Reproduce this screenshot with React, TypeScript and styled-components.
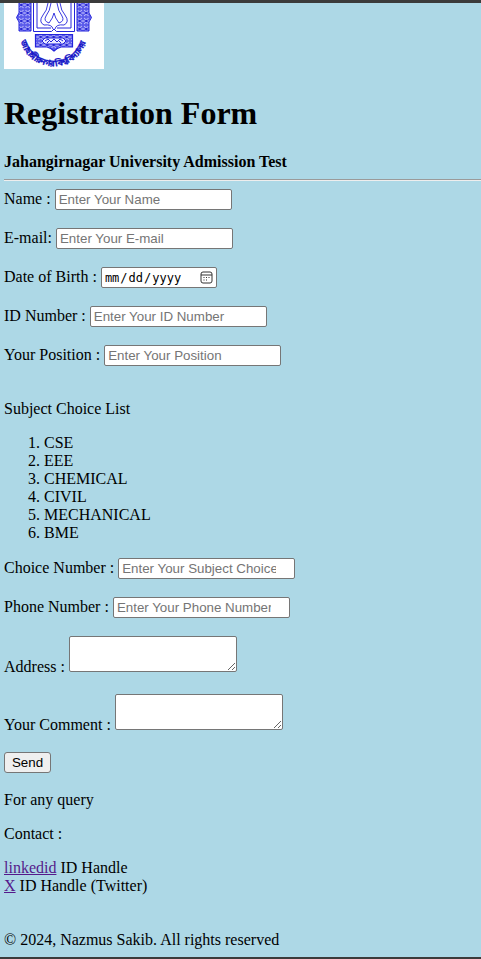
import React from "react";
import styled, { createGlobalStyle } from "styled-components";

const GlobalStyle = createGlobalStyle`
  * { box-sizing: border-box; }
  html, body { margin: 0; background: #3b3b3b; }
  body { font: 16px/18px "Liberation Serif", "Times New Roman", serif; color: #000; }
`;

const Page = styled.main`
  height: 959px;
  overflow: hidden;
  border-top: 3px solid #3b3b3b;
  border-bottom: 2px solid #3b3b3b;
  background: lightblue;
  padding-left: 4px;
`;

const Logo = styled.svg`
  display: block;
  width: 100px;
  height: 66px;
  background: #fff;
`;

const Title = styled.h1`
  margin: 26px 0 0;
  font-size: 32px;
  line-height: 37px;
`;

const Subtitle = styled.h4`
  margin: 21px 0 0;
  font-size: 16px;
  line-height: 18px;
`;

const Rule = styled.hr`
  margin: 8px 0;
  border: 0;
  border-top: 1px solid #9a9a9a;
  border-bottom: 1px solid #eeeeee;
  height: 2px;
`;

const Row = styled.label<{ $gap?: number }>`
  display: flex;
  align-items: baseline;
  gap: 4px;
  height: 21px;
  margin-bottom: ${(p) => p.$gap ?? 18}px;
  white-space: nowrap;
`;

const AreaRow = styled.label`
  display: flex;
  align-items: flex-end;
  gap: 4px;
  height: 40px;
  margin-bottom: 18px;
`;

const Field = styled.input`
  width: 177px;
  height: 21px;
  padding: 1px 18px 1px 3px;
  border: 1px solid #767676;
  border-radius: 2px;
  background: #fff;
  font: 13.333px "Liberation Sans", Arial, sans-serif;
  outline: none;
  &::placeholder { color: #757575; opacity: 1; }
`;

const DateBox = styled.span`
  display: inline-grid;
  grid-template-columns: 116px;
  align-items: center;
`;

const DateField = styled.input`
  grid-area: 1 / 1;
  width: 116px;
  height: 21px;
  padding: 1px 2px;
  border: 1px solid #767676;
  border-radius: 2px;
  background: #fff;
  color: #000;
  font: 12px "DejaVu Sans Mono", monospace;
  &::-webkit-calendar-picker-indicator { opacity: 0; }
`;

const CalendarIcon = styled.svg`
  grid-area: 1 / 1;
  justify-self: end;
  width: 13px;
  height: 13px;
  margin-right: 4px;
  pointer-events: none;
`;

const Area = styled.textarea`
  width: 168px;
  height: 36px;
  margin-bottom: 4px;
  border: 1px solid #767676;
  border-radius: 2px;
  background: #fff;
  resize: both;
`;

const Text = styled.p<{ $top?: number }>`
  margin: ${(p) => p.$top ?? 16}px 0 0;
`;

const Subjects = styled.ol`
  margin: 16px 0;
  padding-left: 40px;
`;

const Send = styled.button`
  display: block;
  width: 47px;
  height: 21px;
  padding: 0;
  border: 1px solid #767676;
  border-radius: 3px;
  background: #efefef;
  color: #000;
  font: 13.333px "Liberation Sans", Arial, sans-serif;
`;

const Link = styled.a`
  color: #551a8b;
  text-decoration: underline;
`;

const subjects = ["CSE", "EEE", "CHEMICAL", "CIVIL", "MECHANICAL", "BME"];

function Crest() {
  return (
    <Logo viewBox="4 3 100 66" role="img" aria-label="Jahangirnagar University">
      <defs>
        <pattern id="lace" x="18" y="1" width="6.5" height="8" patternUnits="userSpaceOnUse">
          <rect width="6.5" height="8" fill="#5a5aea" />
          <path d="M1 1L3.2 3 5.5 1M1 7L3.2 5 5.5 7M0 4H1.6M5 4H6.5" stroke="#dcdcff" strokeWidth=".9" fill="none" />
          <circle cx="3.2" cy="4" r="1" fill="#1414c8" />
        </pattern>
        <path id="motto" d="M20.5 41A34 34 0 0 0 86.5 40" />
      </defs>
      <g stroke="#2424db" strokeWidth="1">
        <path d="M19 2H31V31H19V22L16.5 17.500L19 13Z M77 2H89V13L91.500 17.500L89 22V31H77Z" fill="url(#lace)" />
        <path d="M33.500 3V31.500H51.500L54 29L56.500 31.500H74.500V3M37 3V28H51M71 3V28H57" fill="none" />
        <path d="M48 3Q47 11 43 15Q38 22 44 25Q52 24 53 29M60 3Q61 11 65 15Q70 22 64 25Q56 24 55 29M51 3Q50 11 46 16Q43 21 49 23Q53 18 54 13Q55 18 59 23Q65 21 62 16Q58 11 57 3" fill="none" strokeWidth=".9" />
      </g>
      <path d="M35.500 34.500H72.500V47H61Q57 48 54 51Q51 48 47 47H35.500Z" fill="url(#lace)" stroke="#2424db" strokeWidth="1.2" />
      <path d="M42 41L45 38H63L66 41L63 44H45Z" fill="#ececff" stroke="#2424db" />
      <path d="M45 41l3-2 3 3 3-3 3 3 3-3 3 2M47 43l2-2M61 43l-2-2" fill="none" stroke="#2424db" strokeWidth="1" />
      <text fill="#1717c8" stroke="#1717c8" strokeWidth=".25" fontSize="8.8" fontWeight="700" fontFamily="Noto Sans Bengali, Noto Sans, sans-serif">
        <textPath href="#motto" textLength="87">জাহাঙ্গীরনগর বিশ্ববিদ্যালয়</textPath>
      </text>
    </Logo>
  );
}

export default function App() {
  return (
    <>
      <GlobalStyle />
      <Page>
        <Crest />
        <Title>Registration Form</Title>
        <Subtitle>Jahangirnagar University Admission Test</Subtitle>
        <Rule />
        <Row>Name : <Field placeholder="Enter Your Name" /></Row>
        <Row>E-mail: <Field placeholder="Enter Your E-mail" /></Row>
        <Row>
          Date of Birth :
          <DateBox>
            <DateField type="date" />
            <CalendarIcon viewBox="0 0 13 13" fill="none" stroke="#333">
              <rect x="1" y="1" width="11" height="11" rx="2" />
              <path d="M1 4H12" />
              <path d="M6 6.500H7M8.500 6.500H9.500M3.500 9H4.500M6 9H7M3.500 6.500H4.500" strokeWidth="1.2" />
            </CalendarIcon>
          </DateBox>
        </Row>
        <Row>ID Number : <Field placeholder="Enter Your ID Number" /></Row>
        <Row $gap={34}>Your Position : <Field placeholder="Enter Your Position" /></Row>
        <Text $top={0}>Subject Choice List</Text>
        <Subjects>{subjects.map((s) => <li key={s}>{s}</li>)}</Subjects>
        <Row>Choice Number : <Field placeholder="Enter Your Subject Choice" /></Row>
        <Row>Phone Number : <Field placeholder="Enter Your Phone Number" /></Row>
        <AreaRow>Address : <Area /></AreaRow>
        <AreaRow>Your Comment : <Area /></AreaRow>
        <Send type="button">Send</Send>
        <Text $top={18}>For any query</Text>
        <Text>Contact :</Text>
        <Text>
          <Link href="#linkedin">linkedid</Link> ID Handle<br />
          <Link href="#x">X</Link> ID Handle (Twitter)
        </Text>
        <Text $top={36}>© 2024, Nazmus Sakib. All rights reserved</Text>
      </Page>
    </>
  );
}
